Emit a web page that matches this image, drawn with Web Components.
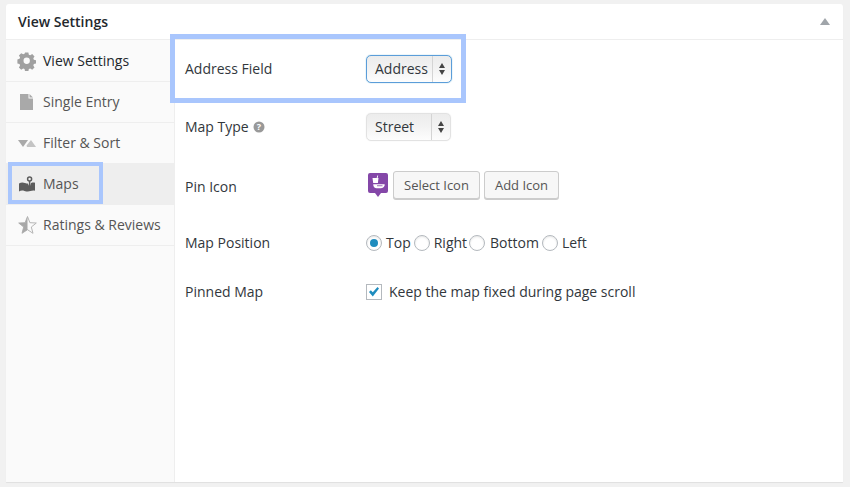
<!DOCTYPE html>
<html>
<head>
<meta charset="utf-8">
<title>View Settings</title>
<style>
  html, body { margin: 0; height: 100%; background: #f1f1f1; overflow: hidden; }
  body { font: 14px/20px "Open Sans", sans-serif; color: #444; }
</style>
</head>
<body>
<settings-panel heading="View Settings">
  <side-tab slot="tabs" label="View Settings" icon="gear" active></side-tab>
  <side-tab slot="tabs" label="Single Entry" icon="page"></side-tab>
  <side-tab slot="tabs" label="Filter &amp; Sort" icon="sort"></side-tab>
  <side-tab slot="tabs" label="Maps" icon="map" current></side-tab>
  <side-tab slot="tabs" label="Ratings &amp; Reviews" icon="star"></side-tab>

  <setting-row label="Address Field" style="height:58px">
    <fake-select value="Address" focused></fake-select>
  </setting-row>
  <setting-row label="Map Type" help style="height:58px">
    <fake-select value="Street"></fake-select>
  </setting-row>
  <setting-row label="Pin Icon" style="height:62px">
    <pin-picker></pin-picker>
  </setting-row>
  <setting-row label="Map Position" style="height:50px">
    <radio-group></radio-group>
  </setting-row>
  <setting-row label="Pinned Map" style="height:48px">
    <check-line>Keep the map fixed during page scroll</check-line>
  </setting-row>
</settings-panel>

<script>
const ICONS = {
  gear: `<svg width="20" height="20" viewBox="0 0 20 20"><path fill="#a0a0a0" fill-rule="evenodd" d="M8.200 1.500h3.600l.5 2.400 1.500.6 2.100-1.300 2.500 2.500-1.300 2.100.6 1.500 2.300.6v3.400l-2.300.6-.6 1.500 1.300 2.100-2.500 2.500-2.100-1.300-1.500.6-.5 2.300H8.200l-.5-2.300-1.500-.6-2.100 1.300-2.500-2.500 1.300-2.100-.6-1.500-2.300-.6V8.900l2.300-.6.6-1.500-1.300-2.100 2.500-2.500 2.100 1.300 1.500-.6zM10 7a3.400 3.400 0 1 0 0 6.800A3.400 3.400 0 0 0 10 7z" transform="translate(.4 .1) scale(.93)"/></svg>`,
  page: `<svg width="20" height="20" viewBox="0 0 20 20"><path fill="#a9a9a9" d="M3 2h8.500v4.500H16V18H3z"/><path fill="#a9a9a9" d="M12.500 2 16 5.500h-3.500z"/></svg>`,
  sort: `<svg width="20" height="20" viewBox="0 0 20 20"><path fill="#a9a9a9" d="M1 7h10l-5 7z"/><path fill="#c4c4c4" d="M9.500 12.500 14 7l5 7h-9z"/></svg>`,
  map: `<svg width="20" height="20" viewBox="0 0 20 20"><path fill="#5c5c5c" d="M2 9.500c1.800-1.200 3.600-1.500 6-.6 1.200.4 2 .5 2.800.5L12.600 13l1.500-4c1.400-.5 2.500-.6 3.900-.2v8c-1.600-.5-2.800-.3-4.500.3-2 .7-3.800.6-6-.2-2.200-.8-3.800-.6-5.500.6z"/><circle cx="12.600" cy="5" r="2" fill="none" stroke="#5c5c5c" stroke-width="1.500"/><path stroke="#5c5c5c" stroke-width="1.500" d="M12.600 7v6"/></svg>`,
  star: `<svg width="20" height="20" viewBox="0 0 20 20"><path fill="#fafafa" stroke="#b5b5b5" d="M10.500 1.500l2.400 6.200 6.400.3-5 4 1.700 6.300-5.500-3.600-5.500 3.600 1.700-6.300-5-4 6.400-.3z"/><path fill="#a8a8a8" d="M10.500 1.500v13.200l-5.500 3.600 1.700-6.300-5-4 6.400-.3z"/></svg>`
};

class SettingsPanel extends HTMLElement {
  constructor() {
    super();
    this.attachShadow({ mode: "open" });
    this.shadowRoot.innerHTML = `
      <style>
        :host {
          display: flex;
          flex-direction: column;
          position: relative;
          box-sizing: border-box;
          margin: 4px 7px 0 6px;
          height: 478px;
          background: #fff;
          border-radius: 3px 3px 0 0;
          box-shadow: 0 1px 1px rgba(0,0,0,.07);
        }
        header {
          display: flex;
          align-items: center;
          justify-content: space-between;
          height: 36px;
          box-sizing: border-box;
          padding: 0 12px;
          border-bottom: 1px solid #eee;
          font-weight: 600;
          font-size: 14px;
          color: #23282d;
        }
        .arrow {
          width: 0; height: 0;
          margin-right: 1px;
          border: 5px solid transparent;
          border-top: 0;
          border-bottom: 7px solid #a0a5aa;
        }
        .body { display: flex; flex: 1; min-height: 0; }
        nav {
          width: 169px;
          box-sizing: border-box;
          padding-top: 1px;
          background: #fafafa;
          border-right: 1px solid #eee;
          flex: none;
        }
        main { flex: 1; }
        .mark {
          position: absolute;
          box-sizing: border-box;
          border: 5px solid #a9c6fd;
          pointer-events: none;
        }
        .mark.field { left: 164px; top: 30px; width: 296px; height: 69px; }
        .mark.tab { left: 2px; top: 158px; width: 95px; height: 42px; border-width: 4.500px; }
      </style>
      <header><span>${this.getAttribute("heading")}</span><span class="arrow"></span></header>
      <div class="body">
        <nav><slot name="tabs"></slot></nav>
        <main><slot></slot></main>
      </div>
      <div class="mark field"></div>
      <div class="mark tab"></div>`;
  }
}

class SideTab extends HTMLElement {
  constructor() {
    super();
    this.attachShadow({ mode: "open" });
    this.shadowRoot.innerHTML = `
      <style>
        :host {
          display: flex;
          align-items: center;
          box-sizing: border-box;
          height: 41px;
          padding-left: 11px;
          gap: 6px;
          border-bottom: 1px solid #eee;
          color: #555;
          font-size: 14px;
        }
        :host([active]) { color: #23282d; }
        :host([current]) { background: #eee; border-bottom-color: #eee; }
        svg { display: block; }
      </style>
      ${ICONS[this.getAttribute("icon")]}
      <span>${this.getAttribute("label").replace("&", "&amp;")}</span>`;
  }
}

class SettingRow extends HTMLElement {
  constructor() {
    super();
    this.attachShadow({ mode: "open" });
    const help = this.hasAttribute("help")
      ? `<svg width="12" height="12" viewBox="0 0 12 12"><circle cx="6" cy="6" r="5.500" fill="#999"/><text x="6" y="9.200" font-size="9" font-weight="700" font-family="Open Sans" text-anchor="middle" fill="#fff">?</text></svg>`
      : "";
    this.shadowRoot.innerHTML = `
      <style>
        :host {
          display: grid;
          grid-template-columns: 181px 1fr;
          align-items: center;
          box-sizing: border-box;
          padding-left: 10px;
          color: #32373c;
          font-size: 14px;
        }
        .label { display: flex; align-items: center; gap: 4px; }
      </style>
      <div class="label">${this.getAttribute("label")}${help}</div>
      <div><slot></slot></div>`;
  }
}

class FakeSelect extends HTMLElement {
  constructor() {
    super();
    this.attachShadow({ mode: "open" });
    this.shadowRoot.innerHTML = `
      <style>
        :host {
          display: inline-flex;
          box-sizing: border-box;
          width: 85px;
          height: 28px;
          border: 1px solid #e2e2e2;
          border-radius: 5px;
          background: linear-gradient(#ececec, #f3f3f3 50%, #fdfdfd);
          box-shadow: 0 0 1px rgba(0,0,0,.15);
          color: #32373c;
          font-size: 14px;
          line-height: 26px;
          vertical-align: top;
        }
        :host([focused]) { border-color: #5b9dd9; box-shadow: 0 0 1px rgba(30,140,190,.8); width: 86px; }
        .value { flex: 1; padding-left: 8px; }
        .spin {
          width: 18px;
          border-left: 1px solid #d4d4d4;
          display: flex;
          flex-direction: column;
          align-items: center;
          justify-content: center;
          gap: 2px;
        }
        i { width: 0; height: 0; border: 3.500px solid transparent; }
        i.up { border-top: 0; border-bottom: 5px solid #444; }
        i.down { border-bottom: 0; border-top: 5px solid #444; }
      </style>
      <span class="value">${this.getAttribute("value")}</span>
      <span class="spin"><i class="up"></i><i class="down"></i></span>`;
  }
}

class PinPicker extends HTMLElement {
  constructor() {
    super();
    this.attachShadow({ mode: "open" });
    this.shadowRoot.innerHTML = `
      <style>
        :host { display: flex; align-items: flex-start; margin-bottom: 4px; font-size: 13px; color: #555; }
        svg { display: block; margin: 2px 5px 0 2px; }
        button {
          box-sizing: border-box;
          height: 28px;
          margin-right: 4px;
          padding: 0 10px;
          border: 1px solid #ccc;
          border-radius: 3px;
          background: #f7f7f7;
          box-shadow: 0 1px 0 #ccc;
          color: #555;
          font: 13px/26px "Open Sans", sans-serif;
        }
      </style>
      <svg width="20" height="26" viewBox="0 0 20 26">
        <path fill="#8447a8" d="M2 0h16a2 2 0 0 1 2 2v16a2 2 0 0 1-2 2h-5l-3 4-3-4H2a2 2 0 0 1-2-2V2a2 2 0 0 1 2-2z"/>
        <path fill="#fff" d="M4.500 5h4.200l.6-2.600.9.200-.6 2.400h.9l-.6 5H5.200z"/>
        <path fill="#fff" d="M5.200 11.200h10.800c.6 0 .9.400.7 1-.6 2-2 3-4 3H8.500c-1.800 0-3.300-1.600-3.300-4z"/>
        <path fill="#8447a8" d="M9 12.400h5.500v.8H9z"/>
      </svg>
      <button>Select Icon</button>
      <button>Add Icon</button>`;
  }
}

class RadioGroup extends HTMLElement {
  constructor() {
    super();
    this.attachShadow({ mode: "open" });
    const items = [["Top", true, 4, 3], ["Right", false, 4, 2], ["Bottom", false, 5, 3], ["Left", false, 4, 0]];
    this.shadowRoot.innerHTML = `
      <style>
        :host { display: flex; color: #32373c; font-size: 14px; }
        label { display: flex; align-items: center; }
        b {
          position: relative;
          display: block;
          box-sizing: border-box;
          width: 16px; height: 16px;
          border: 1px solid #b4b9be;
          border-radius: 50%;
          background: #fff;
          box-shadow: inset 0 1px 2px rgba(0,0,0,.1);
        }
        b.on::after {
          content: "";
          position: absolute;
          left: 3px; top: 3px;
          width: 8px; height: 8px;
          border-radius: 50%;
          background: #1e8cbe;
        }
      </style>
      ${items.map(([t, on, g, m]) => `<label style="margin-right:${m}px"><b class="${on ? "on" : ""}"></b><span style="margin-left:${g}px">${t}</span></label>`).join("")}`;
  }
}

class CheckLine extends HTMLElement {
  constructor() {
    super();
    this.attachShadow({ mode: "open" });
    this.shadowRoot.innerHTML = `
      <style>
        :host { display: flex; align-items: center; gap: 7px; color: #32373c; font-size: 14px; }
        svg { display: block; }
      </style>
      <svg width="16" height="16" viewBox="0 0 16 16">
        <rect x=".5" y=".5" width="15" height="15" fill="#fff" stroke="#b4b9be"/>
        <path fill="#1e8cbe" d="M3 8l1.800-1.800 2 2L11.500 3 13 4.500 6.800 12.500z"/>
      </svg>
      <span><slot></slot></span>`;
  }
}

customElements.define("settings-panel", SettingsPanel);
customElements.define("side-tab", SideTab);
customElements.define("setting-row", SettingRow);
customElements.define("fake-select", FakeSelect);
customElements.define("pin-picker", PinPicker);
customElements.define("radio-group", RadioGroup);
customElements.define("check-line", CheckLine);
</script>
</body>
</html>
